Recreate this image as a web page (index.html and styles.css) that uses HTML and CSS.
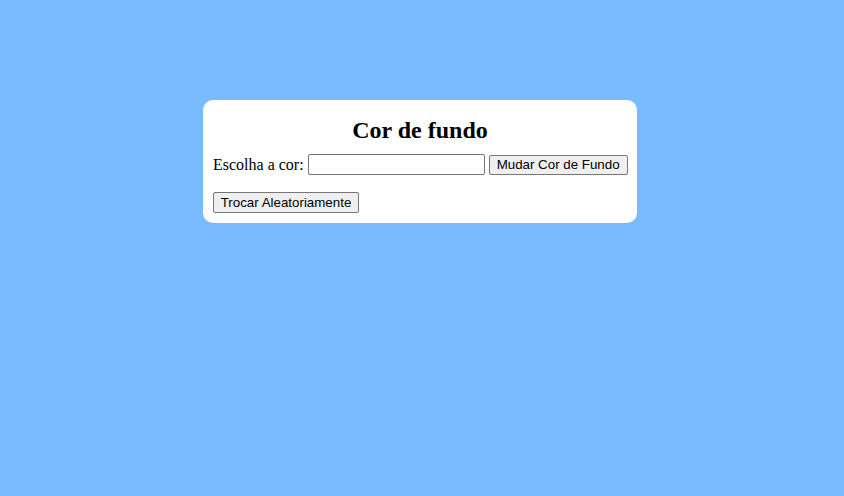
FILE: index.html
```html
<!DOCTYPE html>
<html lang="pt">
<head>
<meta charset="utf-8">
<title>Cor de fundo</title>
<link rel="stylesheet" href="styles.css">
</head>
<body>
<div class="page">
  <div class="card">
    <h2 class="title">Cor de fundo</h2>
    <div class="row">
      <label class="label" for="cor">Escolha a cor:</label>
      <input class="field" id="cor" type="text">
      <button class="btn btn-change" type="button">Mudar Cor de Fundo</button>
    </div>
    <div class="row2">
      <button class="btn btn-random" type="button">Trocar Aleatoriamente</button>
    </div>
  </div>
</div>
</body>
</html>
```

FILE: styles.css
```css
html, body {
  margin: 0;
  padding: 0;
}
body {
  background: #78bbff;
  font-family: "Liberation Serif", "Times New Roman", serif;
  font-size: 16px;
  color: #000;
  height: 496px;
}
.page {
  padding: 100px 0 0 203px;
}
.card {
  box-sizing: border-box;
  width: 434px;
  background: #fff;
  border-radius: 10px;
  padding: 10px;
}
.title {
  margin: 7px 0 10px;
  font-size: 24px;
  line-height: 27px;
  font-weight: bold;
  text-align: center;
}
.row {
  display: flex;
  align-items: center;
  height: 21px;
}
.row > * {
  flex-shrink: 0;
}
.label {
  white-space: nowrap;
  line-height: 18px;
  margin-right: 4px;
}
.field {
  box-sizing: border-box;
  width: 177px;
  height: 21px;
  border: 1px solid #767676;
  border-radius: 2px;
  padding: 1px 2px;
  margin: 0 4px 0 0;
  background: #fff;
  font-family: "Liberation Sans", Arial, sans-serif;
  font-size: 13.33px;
}
.btn {
  box-sizing: border-box;
  height: 20px;
  padding: 0 6px;
  margin: 0;
  border: 1px solid #767676;
  border-radius: 2px;
  background: #efefef;
  color: #000;
  font-family: "Liberation Sans", Arial, sans-serif;
  font-size: 13.33px;
  line-height: 18px;
  white-space: nowrap;
}
.btn-change {
  width: 139px;
}
.btn-random {
  width: 146px;
  height: 21px;
  line-height: 19px;
}
.row2 {
  margin-top: 17px;
  display: flex;
}
```
